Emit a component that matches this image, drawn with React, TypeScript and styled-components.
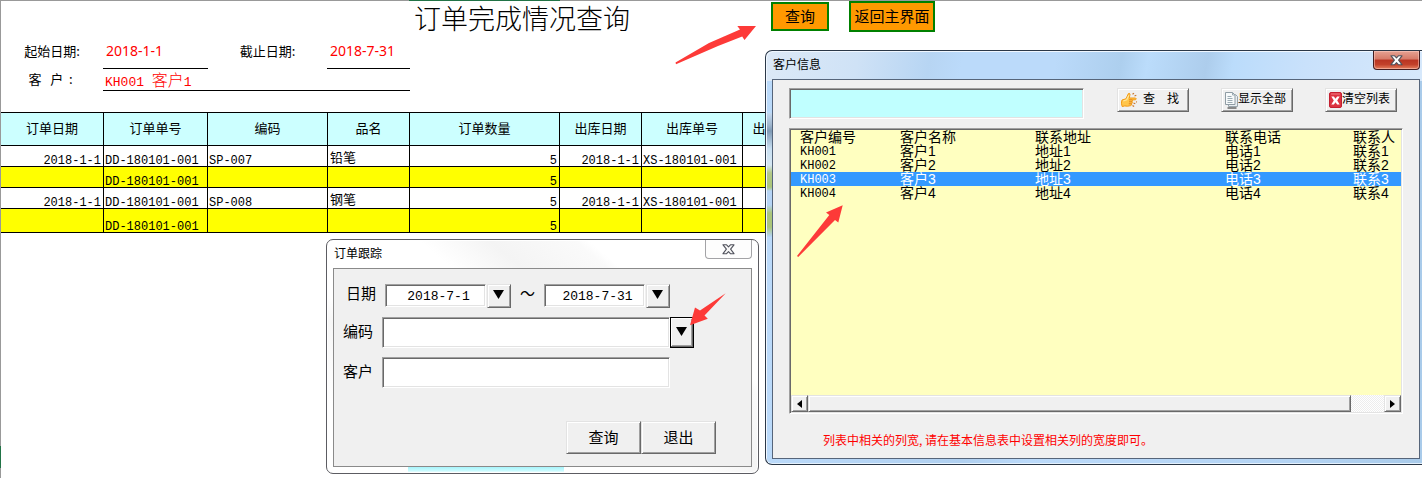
import React from "react";
import styled, { createGlobalStyle, css } from "styled-components";

const cjk = `"Noto Sans CJK SC", sans-serif`;
const sans = `"Noto Sans", ${cjk}`;
const mono = `"Liberation Mono", "Noto Sans CJK SC", monospace`;

const GlobalStyle = createGlobalStyle`
  * { box-sizing: border-box; }
  body { margin: 0; background: #fff; color: #000; font-family: ${cjk}; font-size: 13px; }
  button, input { font: inherit; color: inherit; margin: 0; border-radius: 0; }
`;

const sunken = css`
  border: 1px solid;
  border-color: #a0a0a0 #fff #fff #a0a0a0;
  box-shadow: inset 1px 1px #696969, inset -1px -1px #e3e3e3;
`;

const raised = css`
  border: 1px solid;
  border-color: #e3e3e3 #696969 #696969 #e3e3e3;
  box-shadow: inset 1px 1px #fff, inset -1px -1px #a0a0a0;
  background: #f0f0f0;
`;

/* ---------- worksheet ---------- */

const Page = styled.main`
  position: relative;
  min-height: 100vh;
  border-top: 1px solid #999;
  border-left: 1px solid #999;
`;

const SheetHead = styled.header`
  display: grid;
  grid-template-columns: 102px 105px 119px 83px 361px auto;
  grid-template-rows: 33px 35px 22px;
  margin-bottom: 21px;
`;

const Title = styled.h1`
  grid-column: 5;
  margin: 0;
  padding-left: 4px;
  font-size: 27px;
  font-weight: 300;
  line-height: 34px;
`;

const Actions = styled.div`
  grid-column: 6;
  display: flex;
  align-items: center;
  gap: 20px;
  height: 31px;
`;

const SheetButton = styled.button<{ $large?: boolean }>`
  width: ${(p) => (p.$large ? 86 : 58)}px;
  height: ${(p) => (p.$large ? 31 : 29)}px;
  padding: 0 0 2px;
  border: 2px solid #008000;
  background: #ff9900;
  font-size: 15px;
  line-height: 20px;
  white-space: nowrap;
`;

const FieldLabel = styled.span`
  text-align: center;
  line-height: 34px;
  white-space: pre;
`;

const CustomerLabel = styled(FieldLabel)`
  grid-column: 1;
  line-height: 20px;
`;

const DateValue = styled.span`
  padding-left: 3px;
  border-bottom: 1px solid #000;
  color: #f00;
  font-family: ${sans};
  font-size: 14px;
  line-height: 34px;
`;

const CustomerValue = styled.span`
  grid-column: 2 / 5;
  height: 22px;
  padding-left: 2px;
  border-bottom: 1px solid #000;
  color: #f00;
  font-family: ${mono};
  font-size: 13px;
  line-height: 28px;
  white-space: pre;
`;

const Wide = styled.span`
  font-size: 16px;
  font-weight: 300;
  line-height: 20px;
`;

const Table = styled.table`
  width: 814px;
  table-layout: fixed;
  border-collapse: separate;
  border-spacing: 0;
  border-top: 1px solid #000;
`;

const HeadCell = styled.th`
  height: 33px;
  padding: 0 0 2px;
  border-right: 1px solid #000;
  border-bottom: 1px solid #000;
  background: #ccffff;
  font-weight: 400;
  line-height: 20px;
`;

const Row = styled.tr<{ $shade: boolean; $tall: boolean }>`
  height: ${(p) => (p.$tall ? 24 : 21)}px;
  background: ${(p) => (p.$shade ? "#ffff00" : "#ffffff")};
`;

const Cell = styled.td<{ $right: boolean }>`
  padding: 0 2px 0 1px;
  border-right: 1px solid #000;
  border-bottom: 1px solid #000;
  font-family: ${mono};
  font-size: 12px;
  line-height: 10px;
  vertical-align: bottom;
  text-align: ${(p) => (p.$right ? "right" : "left")};
  white-space: nowrap;
`;

const ProductCell = styled(Cell)`
  padding-left: 2px;
  font-size: 13px;
  line-height: 14px;
`;

const columns = [
  { name: "订单日期", width: 103 },
  { name: "订单单号", width: 104 },
  { name: "编码", width: 120 },
  { name: "品名", width: 82 },
  { name: "订单数量", width: 150 },
  { name: "出库日期", width: 82 },
  { name: "出库单号", width: 101 },
  { name: "出库数量", width: 72 },
];

const orders = [
  ["2018-1-1", "DD-180101-001", "SP-007", "铅笔", "5", "2018-1-1", "XS-180101-001", ""],
  ["", "DD-180101-001", "", "", "5", "", "", ""],
  ["2018-1-1", "DD-180101-001", "SP-008", "钢笔", "5", "2018-1-1", "XS-180101-001", ""],
  ["", "DD-180101-001", "", "", "5", "", "", ""],
];

const rightColumns = [0, 4, 5];

const ActiveColumn = styled.i`
  position: absolute;
  top: -1px;
  left: 408px;
  width: 151px;
  height: 1px;
  background: #217346;
`;

const ActiveRow = styled.i`
  position: absolute;
  top: 445px;
  left: -1px;
  width: 1px;
  height: 22px;
  background: #217346;
`;

/* ---------- floating windows ---------- */

const TrackWindow = styled.section`
  position: absolute;
  top: 238px;
  left: 325px;
  width: 433px;
  padding: 0 6px 6px;
  border: 1px solid #5c5c62;
  border-radius: 7px;
  background:
    linear-gradient(#a8f4fb, #c8fbff 60%, #fff) 81px 100% / 156px 6px no-repeat,
    linear-gradient(40deg, #fff 12%, #f7f7f7 26%, #fff 30%, #fff 52%, #f4f4f4 62%, #fafafa 74%, #fff 76%);
  box-shadow: inset 0 0 0 1px #fff;
`;

const TitleBar = styled.header`
  display: flex;
  justify-content: space-between;
  height: 28px;
`;

const WindowTitle = styled.h2`
  margin: 0;
  padding-left: 1px;
  font-size: 12px;
  font-weight: 400;
  line-height: 26px;
`;

const CloseButton = styled.button<{ $red?: boolean }>`
  display: flex;
  align-items: center;
  justify-content: center;
  width: 47px;
  height: 19px;
  padding: 0;
  border: 1px solid ${(p) => (p.$red ? "#431d20" : "#a3a3a6")};
  border-top: 0;
  border-radius: 0 0 4px 4px;
  background: ${(p) =>
    p.$red ? "linear-gradient(#e5a293, #d67a68 45%, #b93422 50%, #c2412a 75%, #e5805f)" : "#fdfdfd"};
  box-shadow: ${(p) => (p.$red ? "inset 0 0 0 1px rgba(255, 210, 200, .5)" : "none")};
`;

const TrackPanel = styled.form`
  display: flex;
  flex-direction: column;
  gap: 9px;
  height: 199px;
  padding: 15px 35px 0 9px;
  border: 1px solid #8a8a8a;
  background: #f0f0f0;
`;

const FormRow = styled.div<{ $tall?: boolean }>`
  display: flex;
  height: ${(p) => (p.$tall ? 31 : 24)}px;
  padding-left: ${(p) => (p.$tall ? 0 : 3)}px;
`;

const Label = styled.label<{ $tall?: boolean }>`
  width: 39px;
  font-size: 15px;
  line-height: ${(p) => (p.$tall ? 28 : 18)}px;
`;

const DateInput = styled.input`
  ${sunken}
  width: 101px;
  height: 23px;
  margin-right: 1px;
  padding: 2px 0 0 6px;
  background: #fff;
  font-family: ${mono};
  font-size: 13px;
  text-align: center;
`;

const TextInput = styled.input`
  ${sunken}
  width: 288px;
  height: 31px;
  padding: 0 6px;
  background: #fff;
`;

const DropButton = styled.button<{ $focused?: boolean }>`
  ${raised}
  display: flex;
  justify-content: center;
  width: 24px;
  height: 100%;
  padding: ${(p) => (p.$focused ? "9px 2px 0 0" : "5px 2px 0 0")};
  ${(p) =>
    p.$focused &&
    css`
      border-color: #000;
      box-shadow: inset -1px -1px #696969, inset 1px 1px #fff, inset -2px -2px #a0a0a0;
    `}
`;

const Tilde = styled.span`
  width: 33px;
  text-align: center;
  font-size: 15px;
  line-height: 18px;
`;

const Footer = styled.div`
  display: flex;
  justify-content: flex-end;
  margin-top: 24px;
`;

const PushButton = styled.button`
  ${raised}
  width: 75px;
  height: 33px;
  padding: 0 0 2px;
  font-size: 15px;
`;

const CustomerWindow = styled.section`
  position: absolute;
  top: 49px;
  left: 764px;
  right: 0;
  padding: 0 2px 5px 6px;
  border: 1px solid #2b3848;
  border-right: 0;
  border-radius: 7px 0 0 7px;
  background:
    linear-gradient(
      #c4d9f0 0, #9fb6cd 12px, #7f9ab5 18px, #c9e0f2 36px, #d6e7f3 52px,
      #b3c987 60px, #abc67a 74px, #b6d4f5 78px, #b6d4f5 92px,
      #abc67a 100px, #abc67a 114px, #b6d6fa 124px
    ) 1px 62px / 5px 124px no-repeat,
    linear-gradient(100deg, #dce9f7 0, #cfe2f6 14%, #b7d5f3 25%, #bbdafa 30%, #bbdafa 44%,
      #adcfee 54%, #bbdcfb 58%, #adcdec 67%, #bbdcfb 71%, #c9e1fb 82%, #d6e8fb 100%) 0 0 / 100% 30px no-repeat,
    linear-gradient(90deg, #bbdafa, #b0d0f0 30%, #bbdafa 40%, #b4d4f4 80%, #a9cbea);
  box-shadow: inset 1px 1px #f0f7ff, inset 0 -1px #e4f1fd;
`;

const CustomerPanel = styled.div`
  height: 380px;
  padding: 8px 16px 0;
  border: 1px solid #56657a;
  background: #f0f0f0;
`;

const SearchBar = styled.div`
  display: flex;
  align-items: flex-start;
  padding-right: 6px;
  margin-bottom: 9px;
`;

const SearchInput = styled.input`
  ${sunken}
  flex: 0 1 295px;
  min-width: 0;
  height: 31px;
  margin-right: auto;
  padding: 0 6px;
  background: #c0ffff;
`;

const ToolButton = styled.button<{ $gap?: number }>`
  ${raised}
  display: flex;
  align-items: center;
  gap: ${(p) => p.$gap ?? 0}px;
  width: 72px;
  height: 24px;
  margin-left: 32px;
  padding: 0 0 0 3px;
  font-size: 12px;
  line-height: 18px;
  white-space: nowrap;

  svg { flex: none; }
  span { margin-bottom: 4px; }
`;

const ListBox = styled.div`
  ${sunken}
  display: flex;
  flex-direction: column;
  height: 286px;
  padding: 1px;
  background: #ffffc0;
`;

const CustomerTable = styled.table`
  width: 100%;
  table-layout: fixed;
  border-collapse: collapse;
  margin-bottom: auto;
  font-size: 14px;
  line-height: 14px;
  font-family: "Liberation Sans", ${cjk};
`;

const CustomerRow = styled.tr<{ $selected?: boolean }>`
  height: 14px;
  background: ${(p) => (p.$selected ? "#3399ff" : "transparent")};
  color: ${(p) => (p.$selected ? "#fff" : "#000")};

  th, td {
    height: 14px;
    padding: 0;
    font-weight: 400;
    text-align: left;
    white-space: nowrap;
  }
  th:first-child, td:first-child { padding-left: 9px; }
  td:first-child {
    padding-top: 2px;
    font-family: ${mono};
    font-size: 12px;
    line-height: 12px;
  }
`;

const ScrollBar = styled.div`
  display: flex;
  height: 17px;
  background: repeating-conic-gradient(#fff 0 25%, #ededed 0 50%) 0 0 / 2px 2px;
`;

const ScrollButton = styled.button`
  ${raised}
  display: flex;
  align-items: center;
  justify-content: center;
  width: 17px;
  height: 17px;
  padding: 0;
`;

const Thumb = styled.div`
  ${raised}
  flex: 1;
  margin-right: 33px;
`;

const Note = styled.p`
  margin: 16px 0 0 34px;
  color: #f00;
  font-size: 12px;
  line-height: 20px;
`;

/* ---------- drawings ---------- */

const ArrowSvg = styled.svg<{ $x: number; $y: number }>`
  position: absolute;
  left: ${(p) => p.$x}px;
  top: ${(p) => p.$y}px;
  fill: #fd3a38;
  pointer-events: none;
`;

const Down = () => (
  <svg width="11" height="9" viewBox="0 0 11 9"><path d="M0 0h11L5.5 9z" /></svg>
);

const CloseGlyph = ({ red }: { red?: boolean }) => (
  <svg width="13" height="11" viewBox="0 0 13 11">
    <path
      d="M1 .8h3.6l1.9 2 1.9-2H12L8.6 5.2l3.4 4.5H8.4l-1.9-2-1.9 2H1l3.4-4.5z"
      fill={red ? "#fff" : "#f8f8f8"}
      stroke="#50525c"
      strokeWidth="1.1"
      strokeLinejoin="round"
    />
  </svg>
);

const HandIcon = () => (
  <svg width="17" height="16" viewBox="0 0 17 16">
    <path d="M1 8 5 6.8 7.4 1.6Q8.8.8 9 2.4L8.300 6h6.200q1.500.8 0 1.800H11q1.300.8 0 2 1 .9-.4 2 .6 1-.8 1.800-3.400 1.100-6 .3L1.200 14.600Q-.4 11 1 8z" fill="#ffc54a" stroke="#f39a16" />
    <path d="M2.300 9l3.400-1.200L7.900 3.200" fill="none" stroke="#ffe79b" strokeWidth="1.3" />
    <path d="M8 7.800h3M8 9.800h3M7.800 11.800h2.800" stroke="#e07c12" strokeWidth=".9" />
    <path d="M11.500 2.200l1.500-1M13.500 4l1.800-.7M12.500 11l1.800.8M11.500 13.400l1.600 1.200M15 9.800l1 .2" stroke="#c9772d" strokeWidth="1.2" />
  </svg>
);

const PageIcon = () => (
  <svg width="13" height="17" viewBox="0 0 13 17">
    <path d="M2.5 16h9" stroke="#222" />
    <path d="M3.500 2.500h7l2 2v10h-9z" fill="#e8edf0" stroke="#9aa6ad" />
    <path d="M.5.5h7l2.500 2.500v9.500H.5z" fill="#f7fafb" stroke="#8f9ca4" />
    <path d="M7.500.5v2.500H10M2.500 4.500h4M2.500 6.500h5M2.500 8.500h5M2.500 10.500h5" fill="none" stroke="#9babb3" />
  </svg>
);

const ClearIcon = () => (
  <svg width="13" height="16" viewBox="0 0 13 16">
    <rect x=".5" y=".5" width="12" height="15" rx="1.5" fill="#dd3340" stroke="#c31f30" />
    <path d="M2 2h9" stroke="#f07a80" />
    <path d="M2.3 4.500h2.600L6.500 6.800l1.600-2.300h2.600L8.200 8.500l2.500 4H8.100l-1.600-2.300-1.600 2.300H2.300l2.500-4z" fill="#fff" />
  </svg>
);

const customers = [1, 2, 3, 4].map((n) => [`KH00${n}`, `客户${n}`, `地址${n}`, `电话${n}`, `联系${n}`]);

export default function App() {
  return (
    <>
      <GlobalStyle />
      <Page>
        <ActiveColumn />
        <ActiveRow />
        <SheetHead>
          <Title>订单完成情况查询</Title>
          <Actions>
            <SheetButton type="button">查询</SheetButton>
            <SheetButton type="button" $large>返回主界面</SheetButton>
          </Actions>
          <FieldLabel>起始日期:</FieldLabel>
          <DateValue>2018-1-1</DateValue>
          <FieldLabel>截止日期:</FieldLabel>
          <DateValue>2018-7-31</DateValue>
          <CustomerLabel>{"客   户  : "}</CustomerLabel>
          <CustomerValue>{"KH001 "}<Wide>客户</Wide>1</CustomerValue>
        </SheetHead>

        <Table>
          <colgroup>
            {columns.map((c) => <col key={c.name} width={c.width} />)}
          </colgroup>
          <thead>
            <tr>{columns.map((c) => <HeadCell key={c.name} scope="col">{c.name}</HeadCell>)}</tr>
          </thead>
          <tbody>
            {orders.map((order, r) => (
              <Row key={r} $shade={r % 2 === 1} $tall={r === orders.length - 1}>
                {order.map((value, c) => {
                  const Part = c === 3 ? ProductCell : Cell;
                  return <Part key={c} $right={rightColumns.includes(c)}>{value}</Part>;
                })}
              </Row>
            ))}
          </tbody>
        </Table>

        <TrackWindow aria-label="订单跟踪">
          <TitleBar>
            <WindowTitle>订单跟踪</WindowTitle>
            <CloseButton type="button" aria-label="关闭"><CloseGlyph /></CloseButton>
          </TitleBar>
          <TrackPanel onSubmit={(e) => e.preventDefault()}>
            <FormRow>
              <Label htmlFor="from">日期</Label>
              <DateInput id="from" defaultValue="2018-7-1" />
              <DropButton type="button" aria-label="选择起始日期"><Down /></DropButton>
              <Tilde>～</Tilde>
              <DateInput id="to" aria-label="截止日期" defaultValue="2018-7-31" />
              <DropButton type="button" aria-label="选择截止日期"><Down /></DropButton>
            </FormRow>
            <FormRow $tall>
              <Label htmlFor="code" $tall>编码</Label>
              <TextInput id="code" />
              <DropButton type="button" $focused aria-label="选择编码"><Down /></DropButton>
            </FormRow>
            <FormRow $tall>
              <Label htmlFor="customer" $tall>客户</Label>
              <TextInput id="customer" />
            </FormRow>
            <Footer>
              <PushButton type="submit">查询</PushButton>
              <PushButton type="button">退出</PushButton>
            </Footer>
          </TrackPanel>
        </TrackWindow>

        <CustomerWindow aria-label="客户信息">
          <TitleBar>
            <WindowTitle>客户信息</WindowTitle>
            <CloseButton type="button" $red aria-label="关闭"><CloseGlyph red /></CloseButton>
          </TitleBar>
          <CustomerPanel>
            <SearchBar>
              <SearchInput aria-label="查找客户" />
              <ToolButton type="button" $gap={5}><HandIcon /><span>查　找</span></ToolButton>
              <ToolButton type="button"><PageIcon /><span>显示全部</span></ToolButton>
              <ToolButton type="button"><ClearIcon /><span>清空列表</span></ToolButton>
            </SearchBar>
            <ListBox>
              <CustomerTable>
                <colgroup>
                  <col width="109" /><col width="135" /><col width="190" /><col width="128" /><col />
                </colgroup>
                <thead>
                  <CustomerRow>
                    {["客户编号", "客户名称", "联系地址", "联系电话", "联系人"].map((h) => <th key={h} scope="col">{h}</th>)}
                  </CustomerRow>
                </thead>
                <tbody>
                  {customers.map((row) => (
                    <CustomerRow key={row[0]} $selected={row[0] === "KH003"}>
                      {row.map((v) => <td key={v}>{v}</td>)}
                    </CustomerRow>
                  ))}
                </tbody>
              </CustomerTable>
              <ScrollBar>
                <ScrollButton type="button" aria-label="向左滚动">
                  <svg width="5" height="8" viewBox="0 0 5 8"><path d="M5 0v8L0 4z" /></svg>
                </ScrollButton>
                <Thumb />
                <ScrollButton type="button" aria-label="向右滚动">
                  <svg width="5" height="8" viewBox="0 0 5 8"><path d="M0 0v8l5-4z" /></svg>
                </ScrollButton>
              </ScrollBar>
            </ListBox>
            <Note>列表中相关的列宽, 请在基本信息表中设置相关列的宽度即可。</Note>
          </CustomerPanel>
        </CustomerWindow>

        <ArrowSvg $x={673} $y={24} width="84" height="42" viewBox="674 25 84 42">
          <path d="M675.5 62.5 709 43 740 29.5 737.3 26 756 26 744.5 40 742.2 36.5 718 46 676 64.2z" />
        </ArrowSvg>
        <ArrowSvg $x={687} $y={290} width="40" height="37" viewBox="688 291 40 37">
          <path d="M725.7 293.3 700 310.5 695 307.500 690 325.3 707.8 318.8 704.5 315.500z" />
        </ArrowSvg>
        <ArrowSvg $x={795} $y={203} width="50" height="56" viewBox="796 204 50 56">
          <path d="M797 256 829.3 215 826 212.5 842.7 205.3 838.3 222.5 835 220 798.2 257z" />
        </ArrowSvg>
      </Page>
    </>
  );
}
